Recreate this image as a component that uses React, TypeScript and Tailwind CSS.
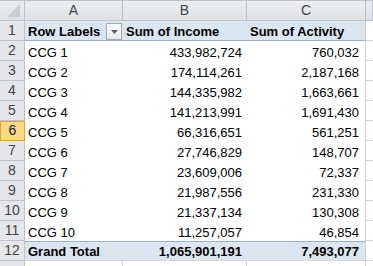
const rows = [
  { label: "CCG 1", income: "433,982,724", activity: "760,032" },
  { label: "CCG 2", income: "174,114,261", activity: "2,187,168" },
  { label: "CCG 3", income: "144,335,982", activity: "1,663,661" },
  { label: "CCG 4", income: "141,213,991", activity: "1,691,430" },
  { label: "CCG 5", income: "66,316,651", activity: "561,251" },
  { label: "CCG 6", income: "27,746,829", activity: "148,707" },
  { label: "CCG 7", income: "23,609,006", activity: "72,337" },
  { label: "CCG 8", income: "21,987,556", activity: "231,330" },
  { label: "CCG 9", income: "21,337,134", activity: "130,308" },
  { label: "CCG 10", income: "11,257,057", activity: "46,854" },
];

function RowNum({ n, active }: { n?: number; active?: boolean }) {
  return (
    <div
      className={
        active
          ? "w-[25px] shrink-0 flex items-end justify-center pb-[1px] border border-[#e3a33c] bg-[#fbd985] text-[#222] text-[14px] leading-[17px]"
          : "w-[25px] shrink-0 flex items-end justify-center pb-[1px] border-r border-b border-[#bcc3cc] bg-[#e4e6ea] text-[#444] text-[14px] leading-[17px]"
      }
    >
      {n}
    </div>
  );
}

function ColHead({ label, w }: { label: string; w: string }) {
  return (
    <div
      className={`${w} shrink-0 flex items-center justify-center border-r border-b border-[#bcc3cc] bg-gradient-to-b from-[#eceef1] to-[#dee1e5] text-[#444] text-[14px]`}
    >
      {label}
    </div>
  );
}

export default function App() {
  return (
    <div className="w-[373px] h-[266px] overflow-hidden bg-white text-[13px] leading-[15px] text-black font-['Liberation_Sans',Arial,sans-serif]">
      {/* column headers */}
      <div className="flex h-[21px] border-t border-[#bcc3cc]">
        <div className="w-[25px] shrink-0 relative border-r border-b border-[#bcc3cc] bg-gradient-to-b from-[#eceef1] to-[#dee1e5]">
          <svg className="absolute right-[4px] bottom-[3px]" width="13" height="13" viewBox="0 0 13 13">
            <polygon points="13,0 13,13 0,13" fill="#c9ccd1" />
          </svg>
        </div>
        <ColHead label="A" w="w-[98px]" />
        <ColHead label="B" w="w-[124px]" />
        <ColHead label="C" w="w-[119px]" />
        <ColHead label="" w="flex-1" />
      </div>

      {/* row 1: pivot header */}
      <div className="flex h-[20px]">
        <RowNum n={1} />
        <div className="w-[341px] shrink-0 flex items-end pb-[1px] bg-[#dce6f1] border-b border-[#95b3d7] border-r border-r-[#d4d4d4] font-bold">
          <div className="w-[98px] shrink-0 flex items-end justify-between pl-[3px] pr-[1px]">
            <span>Row Labels</span>
            <span className="w-[16px] h-[17px] mb-[-1px] flex items-center justify-center border border-[#a7abb0] bg-gradient-to-b from-[#fdfdfd] to-[#e9ecef]">
              <svg width="7" height="4" viewBox="0 0 7 4">
                <polygon points="0,0 7,0 3.5,4" fill="#5b5f66" />
              </svg>
            </span>
          </div>
          <div className="w-[124px] shrink-0 pl-[3px]">Sum of Income</div>
          <div className="flex-1 pl-[3px]">Sum of Activity</div>
        </div>
        <div className="flex-1 border-b border-[#d4d4d4]" />
      </div>

      {/* data rows */}
      {rows.map((r, i) => (
        <div key={r.label} className="flex h-[20px]">
          <RowNum n={i + 2} active={i + 2 === 6} />
          <div className="w-[341px] shrink-0 flex items-end pb-[1px] border-r border-[#d4d4d4]">
            <div className="w-[98px] shrink-0 pl-[3px]">{r.label}</div>
            <div className="w-[124px] shrink-0 text-right pr-[5px]">{r.income}</div>
            <div className="flex-1 text-right pr-[6px]">{r.activity}</div>
          </div>
          <div className="flex-1 border-b border-[#d4d4d4]" />
        </div>
      ))}

      {/* grand total */}
      <div className="flex h-[20px]">
        <RowNum n={12} />
        <div className="w-[341px] shrink-0 flex items-end pb-[1px] bg-[#dce6f1] border-t border-[#95b3d7] border-b border-b-[#d4d4d4] border-r border-r-[#d4d4d4] font-bold">
          <div className="w-[98px] shrink-0 pl-[3px]">Grand Total</div>
          <div className="w-[124px] shrink-0 text-right pr-[5px]">1,065,901,191</div>
          <div className="flex-1 text-right pr-[6px]">7,493,077</div>
        </div>
        <div className="flex-1 border-b border-[#d4d4d4]" />
      </div>

      {/* row 13 (partial, number hidden below the edge) */}
      <div className="flex h-[20px]">
        <RowNum />
        <div className="w-[98px] shrink-0 border-r border-[#d4d4d4]" />
        <div className="w-[124px] shrink-0 border-r border-[#d4d4d4]" />
        <div className="w-[119px] shrink-0 border-r border-[#d4d4d4]" />
        <div className="flex-1" />
      </div>
    </div>
  );
}
